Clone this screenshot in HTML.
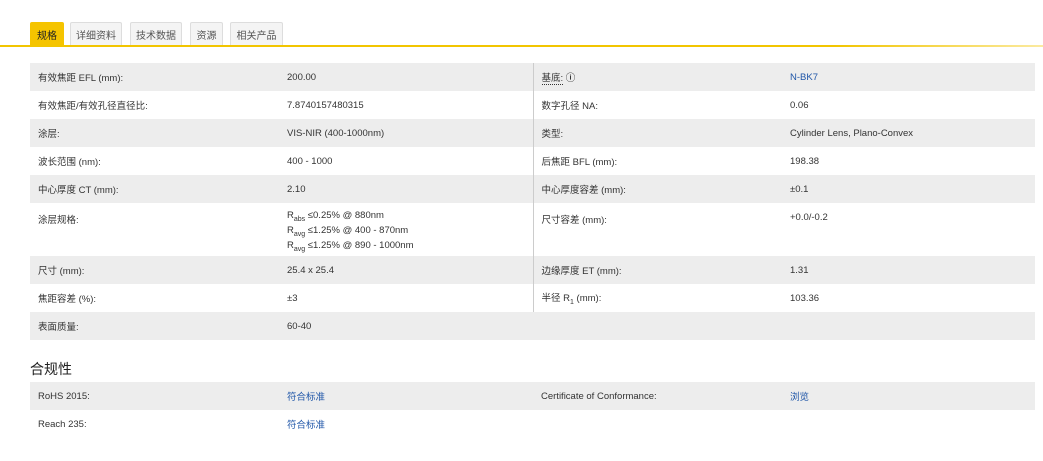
<!DOCTYPE html>
<html><head><meta charset="utf-8"><style>
body{margin:0;width:1043px;height:461px;background:#fff;font-family:"Liberation Sans","Noto Sans CJK SC",sans-serif;color:#333;position:relative;overflow:hidden}
.tab{position:absolute;top:22px;height:24px;font-size:10px;line-height:27px;text-align:center;box-sizing:border-box;border:1px solid #ddd;border-bottom:none;background:#f4f4f4;color:#555;border-radius:2px 2px 0 0}
.tab.on{background:#f5c400;border-color:#f5c400;color:#222}
.line{position:absolute;left:0;top:45px;width:1043px;height:2px;background:linear-gradient(90deg,#f2c500 80%,#fbeaa0)}
table{position:absolute;left:30px;border-collapse:collapse;width:1005px;font-size:9.5px;table-layout:fixed}
td{padding:0 0 0 8px;height:28px;vertical-align:middle}
tr.g td{background:#ededed}
td.c2{border-right:1px solid #ccc}
a{color:#1f56a8;text-decoration:none}
.top td{vertical-align:top;padding-top:9px}
sub{font-size:7px}
h3{position:absolute;left:30px;top:359px;margin:0;font-size:14px;font-weight:normal;color:#222}
.dot{border-bottom:1px dotted #333}
</style></head><body>
<div class="tab on" style="left:30px;width:34px">规格</div>
<div class="tab" style="left:70px;width:52px">详细资料</div>
<div class="tab" style="left:130px;width:52px">技术数据</div>
<div class="tab" style="left:190px;width:33px">资源</div>
<div class="tab" style="left:230px;width:53px">相关产品</div>
<div class="line"></div>
<table style="top:63px">
<colgroup><col style="width:249px"><col style="width:254px"><col style="width:249px"><col></colgroup>
<tr class="g"><td class="c1">有效焦距 EFL (mm):</td><td class="c2">200.00</td><td class="c3"><span class="dot">基底:</span> <b>ⓘ</b></td><td><a>N-BK7</a></td></tr>
<tr><td class="c1">有效焦距/有效孔径直径比:</td><td class="c2">7.8740157480315</td><td>数字孔径 NA:</td><td>0.06</td></tr>
<tr class="g"><td class="c1">涂层:</td><td class="c2">VIS-NIR (400-1000nm)</td><td>类型:</td><td>Cylinder Lens, Plano-Convex</td></tr>
<tr><td class="c1">波长范围 (nm):</td><td class="c2">400 - 1000</td><td>后焦距 BFL (mm):</td><td>198.38</td></tr>
<tr class="g"><td class="c1">中心厚度 CT (mm):</td><td class="c2">2.10</td><td>中心厚度容差 (mm):</td><td>±0.1</td></tr>
<tr class="top"><td class="c1" style="height:44px">涂层规格:</td><td class="c2" style="line-height:11px;padding-top:7px">R<sub>abs</sub> ≤0.25% @ 880nm<br>R<sub>avg</sub> ≤1.25% @ 400 - 870nm<br>R<sub>avg</sub> ≤1.25% @ 890 - 1000nm</td><td>尺寸容差 (mm):</td><td>+0.0/-0.2</td></tr>
<tr class="g"><td class="c1">尺寸 (mm):</td><td class="c2">25.4 x 25.4</td><td>边缘厚度 ET (mm):</td><td>1.31</td></tr>
<tr><td class="c1">焦距容差 (%):</td><td class="c2">±3</td><td>半径 R<sub>1</sub> (mm):</td><td>103.36</td></tr>
<tr class="g"><td class="c1">表面质量:</td><td class="c2" style="border-right:none">60-40</td><td></td><td></td></tr>
</table>
<h3>合规性</h3>
<table style="top:382px">
<colgroup><col style="width:249px"><col style="width:254px"><col style="width:249px"><col></colgroup>
<tr class="g"><td class="c1">RoHS 2015:</td><td class="c2" style="border-right:none"><a>符合标准</a></td><td class="c3">Certificate of Conformance:</td><td><a>浏览</a></td></tr>
<tr><td class="c1">Reach 235:</td><td class="c2" style="border-right:none"><a>符合标准</a></td><td></td><td></td></tr>
</table>
</body></html>
